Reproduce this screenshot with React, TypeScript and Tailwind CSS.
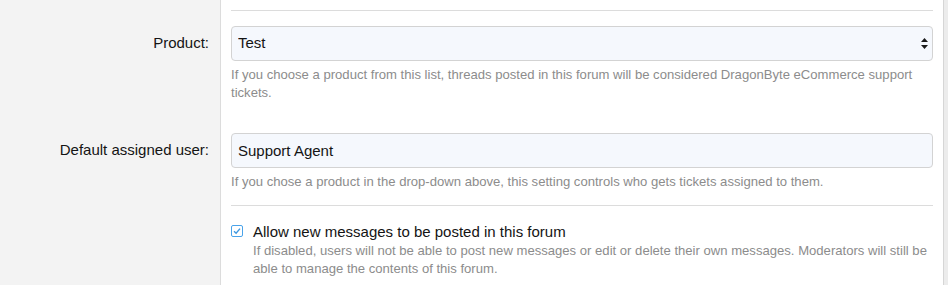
export default function App() {
  return (
    <div className="w-[948px] h-[285px] overflow-hidden flex bg-[#ececec] font-['Liberation_Sans',Arial,sans-serif] text-[#141414]">
      <div className="w-[944px] shrink-0 border-r border-[#d6d6d6] flex flex-col">
        {/* Top strip */}
        <div className="grid grid-cols-[221px_1fr]">
          <div className="bg-[#f3f3f3] border-r border-[#dcdcdc]" />
          <div className="bg-white px-[10px]">
            <div className="h-[11px] border-b border-[#dcdcdc]" />
          </div>
        </div>

        {/* Product */}
        <div className="grid grid-cols-[221px_1fr]">
          <div className="bg-[#f3f3f3] border-r border-[#dcdcdc] pt-[15px] pr-[11px]">
            <div className="h-[35px] flex items-center justify-end text-[15px]">Product:</div>
          </div>
          <div className="bg-white px-[10px] pt-[15px] pb-[15px]">
            <div className="relative">
              <select
                defaultValue="Test"
                className="w-full h-[35px] appearance-none rounded-[4px] border border-[#d3d3d3] bg-[#f5f8fd] px-[6px] text-[15px] text-[#141414] outline-none"
              >
                <option>Test</option>
              </select>
              <svg className="absolute right-[5px] top-[12px] w-[7px] h-[11px]" viewBox="0 0 7 11" fill="#1a1a1a">
                <path d="M3.5 0 L7 4 L0 4 Z" />
                <path d="M0 7 L7 7 L3.5 11 Z" />
              </svg>
            </div>
            <p className="mt-[5px] text-[13.1px] leading-[18px] text-[#8c8c8c]">
              If you choose a product from this list, threads posted in this forum will be considered DragonByte eCommerce support tickets.
            </p>
          </div>
        </div>

        {/* Default assigned user */}
        <div className="grid grid-cols-[221px_1fr]">
          <div className="bg-[#f3f3f3] border-r border-[#dcdcdc] pt-[16px] pr-[11px]">
            <div className="h-[35px] flex items-center justify-end text-[15px]">Default assigned user:</div>
          </div>
          <div className="bg-white px-[10px] pt-[16px]">
            <div className="pb-[14px] border-b border-[#dcdcdc]">
              <input
                defaultValue="Support Agent"
                className="w-full h-[35px] rounded-[4px] border border-[#d3d3d3] bg-[#f5f8fd] px-[6px] text-[15px] text-[#141414] outline-none"
              />
              <p className="mt-[5px] text-[13.1px] leading-[18px] text-[#8c8c8c]">
                If you chose a product in the drop-down above, this setting controls who gets tickets assigned to them.
              </p>
            </div>
          </div>
        </div>

        {/* Allow new messages */}
        <div className="grid grid-cols-[221px_1fr] flex-1">
          <div className="bg-[#f3f3f3] border-r border-[#dcdcdc]" />
          <div className="bg-white px-[10px] pt-[17px]">
            <div className="flex gap-[10px]">
              <div className="pt-[2px]">
                <div className="w-[12px] h-[12px] rounded-[2px] border border-[#4aa3ea] bg-white flex items-center justify-center">
                  <svg className="w-[8px] h-[8px]" viewBox="0 0 8 8" fill="none" stroke="#3d97e0" strokeWidth="1.4">
                    <path d="M1 4.2 L3.1 6.2 L7 1.6" />
                  </svg>
                </div>
              </div>
              <div>
                <div className="text-[15px] leading-[18px]">Allow new messages to be posted in this forum</div>
                <p className="mt-[1px] text-[13.1px] leading-[18px] text-[#8c8c8c]">
                  If disabled, users will not be able to post new messages or edit or delete their own messages. Moderators will still be able to manage the contents of this forum.
                </p>
              </div>
            </div>
          </div>
        </div>
      </div>
    </div>
  );
}
